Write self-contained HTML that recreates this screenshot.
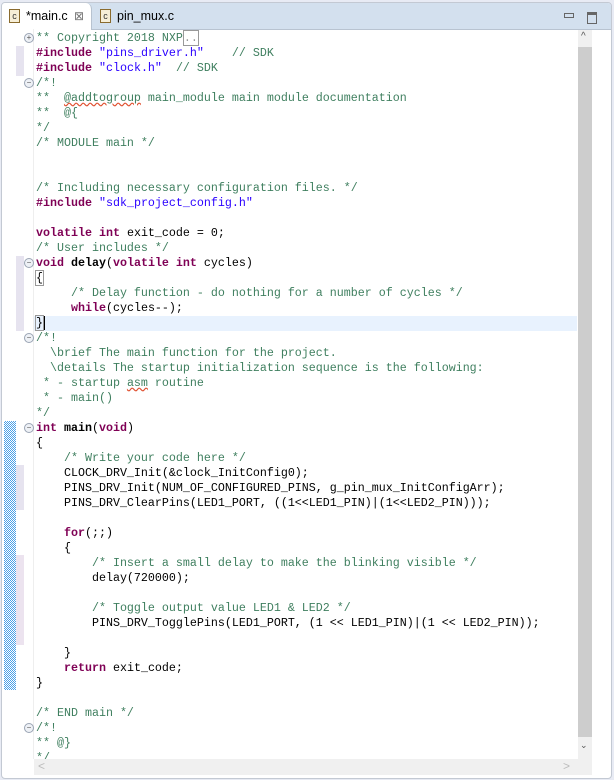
<!DOCTYPE html>
<html><head><style>
body{margin:0;width:614px;height:780px;background:#e8ebf4;overflow:hidden;font-family:"Liberation Sans",sans-serif;position:relative}
.win{position:absolute;left:1px;top:2px;width:609px;height:775px;background:#fff;border:1px solid #c3c9d3;border-radius:4px;overflow:hidden}
.tabs{position:absolute;left:0;top:0;width:609px;height:26px;background:#d3e0ee;border-bottom:1px solid #b8c3d0}
.tab1{position:absolute;left:0;top:0;width:89px;height:27px;background:#fff;border-right:1px solid #b8c3d0;border-radius:0 6px 0 0}
.tabt{position:absolute;top:6px;font-size:12.5px;color:#000}
.ic{position:absolute;top:6px;width:9px;height:12px;border:1px solid #8a6b2e;background:#f7efd8;font-size:9px;line-height:12px;text-align:center;color:#333;font-family:"Liberation Sans",sans-serif}
.code{position:absolute;left:0;top:0;font-family:"Liberation Mono",monospace;font-size:11.67px;white-space:pre}
.l{position:absolute;left:36px;height:15px;line-height:15px}
.c{color:#3f7f5f}.k{color:#7f0055;font-weight:bold}.s{color:#2a00ff}
.fold{position:absolute;left:24px;width:8px;height:8px;border:1px solid #9aa4b4;border-radius:50%;background:#eef1f6;font-size:8px;line-height:8px;text-align:center;color:#555}
</style></head><body>
<div class="win">
<div class="tabs">
 <div class="tab1"></div>
 <div class="ic" style="left:7px">c</div><div class="tabt" style="left:24px">*main.c</div><div class="tabt" style="left:72px;color:#777;font-size:12px">⊠</div>
 <div class="ic" style="left:98px">c</div><div class="tabt" style="left:115px">pin_mux.c</div>
 <div style="position:absolute;left:562px;top:10px;width:8px;height:3px;border:1px solid #666"></div>
 <div style="position:absolute;left:585px;top:9px;width:8px;height:8px;border:1px solid #666;border-top-width:3px"></div>
</div>
</div>
<div style="position:absolute;left:33px;top:29px;width:1px;height:730px;background:#eee"></div>
<div style="position:absolute;left:4px;top:421px;width:12px;height:269px;background:#2b8fe0;background-image:repeating-conic-gradient(#4aa0e8 0 25%,#fff 0 50%);background-size:2px 2px"></div>
<div style="position:absolute;left:16px;top:46px;width:8px;height:30px;background:#e6e3ef"></div>
<div style="position:absolute;left:16px;top:256px;width:8px;height:75px;background:#e6e3ef"></div>
<div style="position:absolute;left:16px;top:465px;width:8px;height:45px;background:#e6e3ef"></div>
<div style="position:absolute;left:16px;top:555px;width:8px;height:90px;background:#ece3ef"></div>
<div style="position:absolute;left:34px;top:316px;width:543px;height:15px;background:#e8f2fe"></div>
<div style="position:absolute;left:578px;top:30px;width:14px;height:730px;background:#f0f0f0"></div>
<div style="position:absolute;left:578px;top:47px;width:14px;height:690px;background:#cdcdcd"></div>
<div style="position:absolute;left:581px;top:31px;font-size:10px;color:#555">^</div>
<div style="position:absolute;left:580px;top:740px;font-size:9px;color:#555">⌄</div>
<div style="position:absolute;left:34px;top:759px;width:558px;height:16px;background:#f0f0f0"></div>
<div style="position:absolute;left:38px;top:759px;font-size:12px;color:#bbb">&lt;</div>
<div style="position:absolute;left:563px;top:759px;font-size:12px;color:#bbb">&gt;</div>
<div class="fold" style="top:33px">+</div><div class="fold" style="top:78px">−</div><div class="fold" style="top:258px">−</div><div class="fold" style="top:333px">−</div><div class="fold" style="top:423px">−</div><div class="fold" style="top:723px">−</div>
<div class="code">
<div class="l c" style="top:31px">** Copyright 2018 NXP<span style="border:1px solid #999;color:#999">..</span></div>
<div class="l" style="top:46px"><span class="k">#include</span> <span class="s">"pins_driver.h"</span>    <span class="c">// SDK</span></div>
<div class="l" style="top:61px"><span class="k">#include</span> <span class="s">"clock.h"</span>  <span class="c">// SDK</span></div>
<div class="l c" style="top:76px">/*!</div>
<div class="l c" style="top:91px">**  <span style="text-decoration:underline wavy #e05030">@addtogroup</span> main_module main module documentation</div>
<div class="l c" style="top:106px">**  @{</div>
<div class="l c" style="top:121px">*/</div>
<div class="l c" style="top:136px">/* MODULE main */</div>
<div class="l c" style="top:181px">/* Including necessary configuration files. */</div>
<div class="l" style="top:196px"><span class="k">#include</span> <span class="s">"sdk_project_config.h"</span></div>
<div class="l" style="top:226px"><span class="k">volatile int</span> exit_code = 0;</div>
<div class="l c" style="top:241px">/* User includes */</div>
<div class="l" style="top:256px"><span class="k">void</span> <b>delay</b>(<span class="k">volatile int</span> cycles)</div>
<div class="l" style="top:271px"><span style="outline:1px solid #999">{</span></div>
<div class="l c" style="top:286px">     /* Delay function - do nothing for a number of cycles */</div>
<div class="l" style="top:301px">     <span class="k">while</span>(cycles--);</div>
<div class="l" style="top:316px"><span style="outline:1px solid #999">}</span><span style="border-left:2px solid #000"></span></div>
<div class="l c" style="top:331px">/*!</div>
<div class="l c" style="top:346px">  \brief The main function for the project.</div>
<div class="l c" style="top:361px">  \details The startup initialization sequence is the following:</div>
<div class="l c" style="top:376px"> * - startup <span style="text-decoration:underline wavy #e05030">asm</span> routine</div>
<div class="l c" style="top:391px"> * - main()</div>
<div class="l c" style="top:406px">*/</div>
<div class="l" style="top:421px"><span class="k">int</span> <b>main</b>(<span class="k">void</span>)</div>
<div class="l" style="top:436px">{</div>
<div class="l c" style="top:451px">    /* Write your code here */</div>
<div class="l" style="top:466px">    CLOCK_DRV_Init(&amp;clock_InitConfig0);</div>
<div class="l" style="top:481px">    PINS_DRV_Init(NUM_OF_CONFIGURED_PINS, g_pin_mux_InitConfigArr);</div>
<div class="l" style="top:496px">    PINS_DRV_ClearPins(LED1_PORT, ((1&lt;&lt;LED1_PIN)|(1&lt;&lt;LED2_PIN)));</div>
<div class="l" style="top:526px">    <span class="k">for</span>(;;)</div>
<div class="l" style="top:541px">    {</div>
<div class="l c" style="top:556px">        /* Insert a small delay to make the blinking visible */</div>
<div class="l" style="top:571px">        delay(720000);</div>
<div class="l c" style="top:601px">        /* Toggle output value LED1 &amp; LED2 */</div>
<div class="l" style="top:616px">        PINS_DRV_TogglePins(LED1_PORT, (1 &lt;&lt; LED1_PIN)|(1 &lt;&lt; LED2_PIN));</div>
<div class="l" style="top:646px">    }</div>
<div class="l" style="top:661px">    <span class="k">return</span> exit_code;</div>
<div class="l" style="top:676px">}</div>
<div class="l c" style="top:706px">/* END main */</div>
<div class="l c" style="top:721px">/*!</div>
<div class="l c" style="top:736px">** @}</div>
<div class="l c" style="top:751px;height:8px;overflow:hidden">*/</div>
</div>
</body></html>
